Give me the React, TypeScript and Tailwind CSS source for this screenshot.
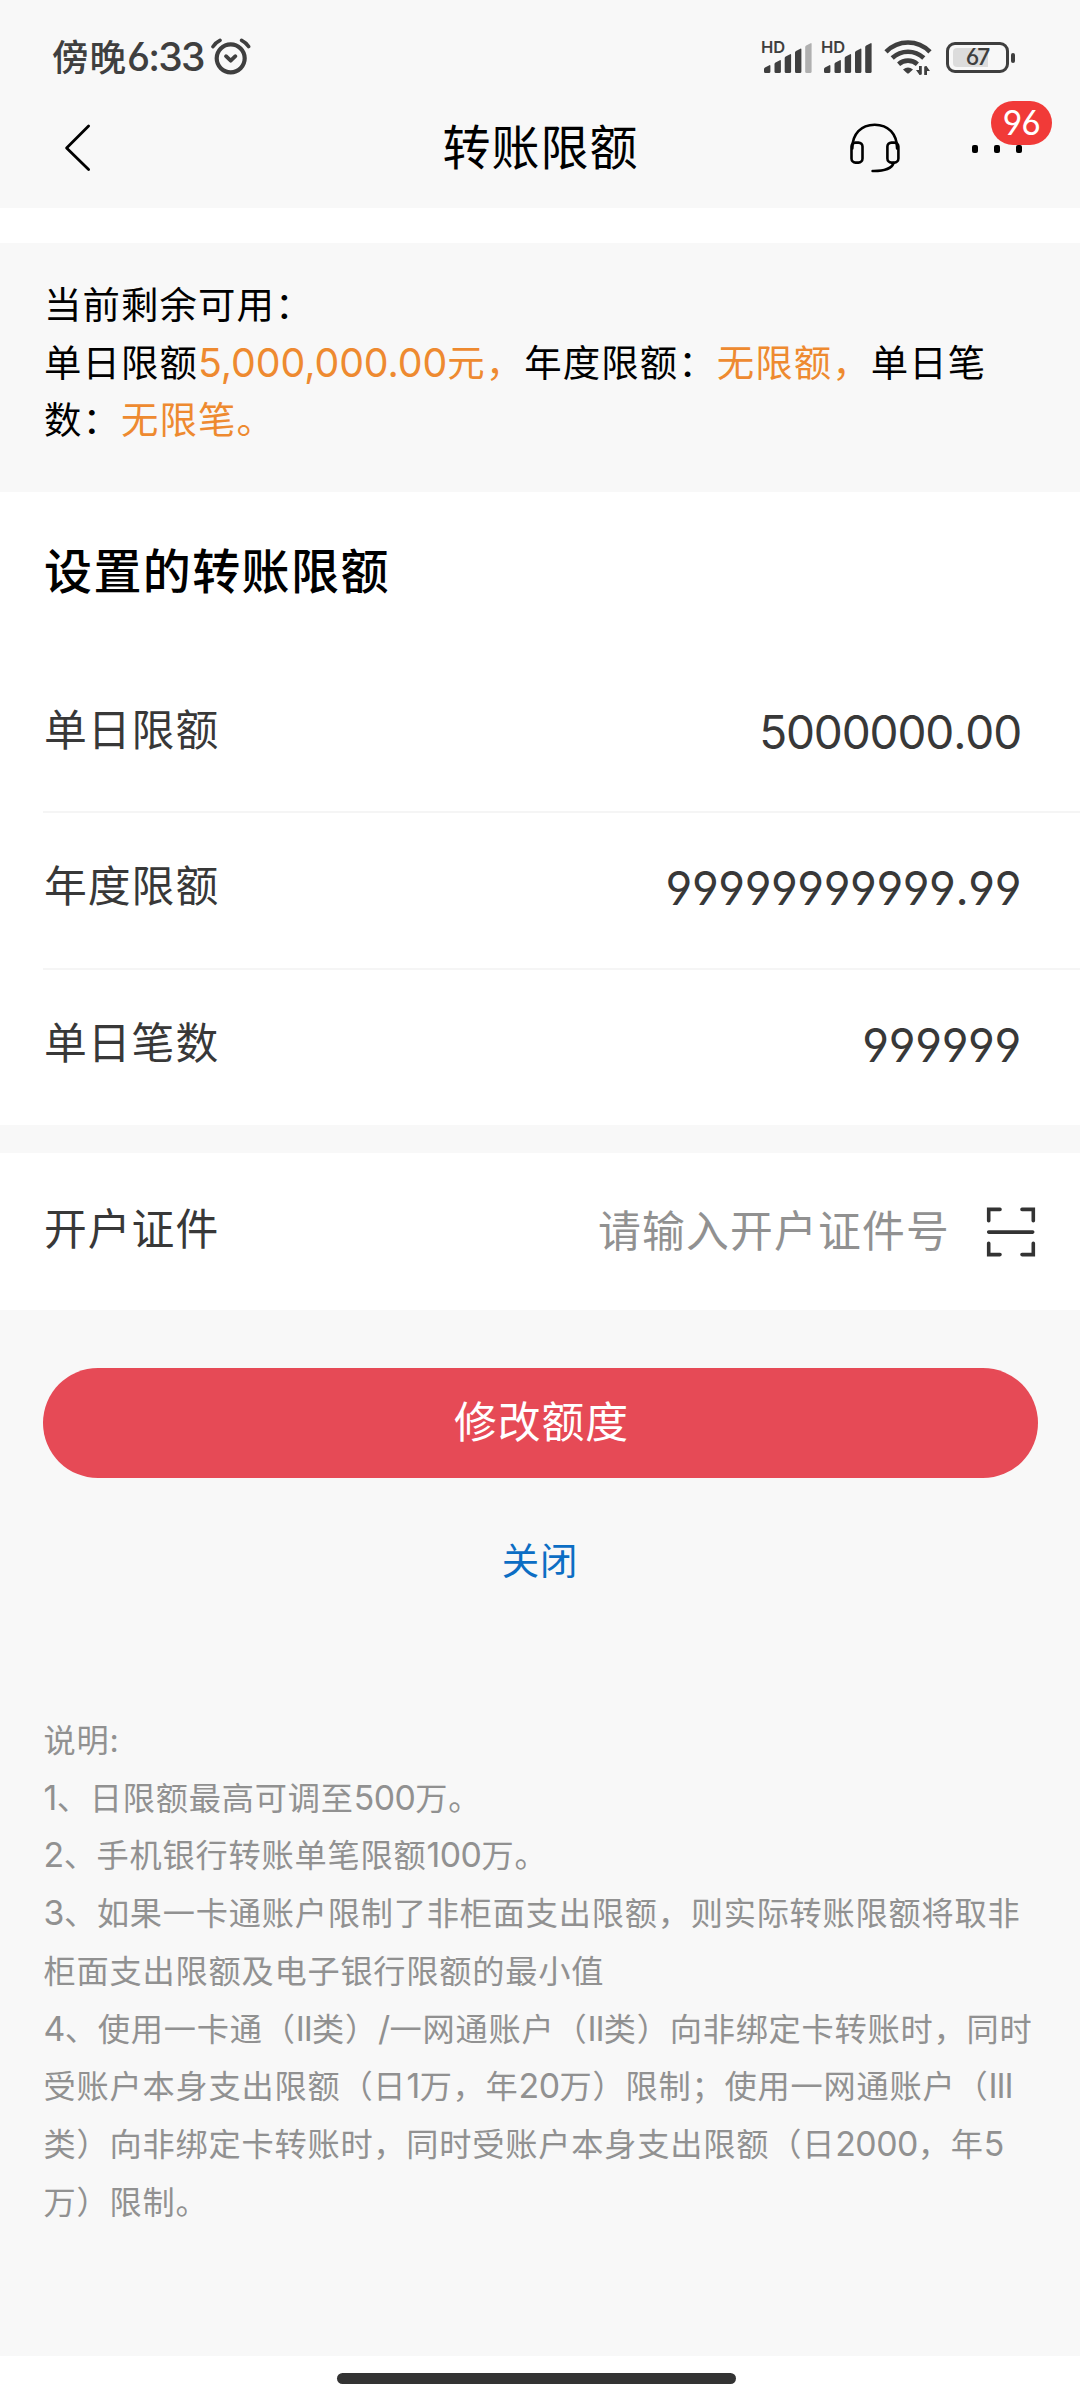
import type { ReactNode } from 'react';

const limits = [
  { label: '单日限额', value: '5000000.00', tracking: 'tracking-[-1.15px]' },
  { label: '年度限额', value: '99999999999.99', tracking: 'tracking-[-0.4px]' },
  { label: '单日笔数', value: '999999', tracking: 'tracking-[-0.3px]' },
];

const bars = [
  { x: 0, h: 8 },
  { x: 10.5, h: 13 },
  { x: 20.7, h: 19 },
  { x: 31, h: 24.5 },
  { x: 41.2, h: 30 },
];

// Latin digits run slightly larger than the Chinese text around them
function N({ children }: { children: ReactNode }) {
  return <span className="text-[1.05em] leading-[0] tracking-[-0.5px]">{children}</span>;
}

// Roman numerals sit tighter than digits
function Roman({ children }: { children: ReactNode }) {
  return <span className="text-[1.05em] leading-[0] tracking-[-1px]">{children}</span>;
}

function AlarmIcon() {
  return (
    <svg width="40" height="37" viewBox="0 0 40 37" fill="none" stroke="#3f3f3f" strokeLinecap="round" strokeLinejoin="round">
      <circle cx="19.7" cy="20.3" r="14" strokeWidth="4.2" />
      <path d="M15 18.2l4.7 4.5 4.7-4.5" strokeWidth="3.8" />
      <path d="M2 8.6Q4.5 4.6 9 2.4M37.6 8.6Q35 4.6 30.6 2.4" strokeWidth="3.6" />
    </svg>
  );
}

function Signal({ weak = false }: { weak?: boolean }) {
  return (
    <div className="relative w-[50px] h-[36px]">
      <span className="absolute -left-px top-px text-[16.5px] leading-[12px] font-semibold">HD</span>
      <svg className="absolute left-[2px] top-[2px]" width="48" height="31" viewBox="0 0 48 31">
        {bars.map((bar, i) => (
          <path
            key={bar.x}
            d={`M${bar.x} ${31 - bar.h + 4}q0-1 1-1.6l4.4-2.2q1-.4 1 .8V29.5q0 1.5-1.4 1.5h-3.6q-1.4 0-1.4-1.5z`}
            fill={weak && i === 4 ? '#b0b0b0' : '#3f3f3f'}
          />
        ))}
      </svg>
    </div>
  );
}

function WifiIcon() {
  return (
    <svg width="48" height="36" viewBox="0 0 48 36" fill="none" stroke="#3f3f3f">
      <path d="M2 11.8C14.5-.6 33.5-.6 46 11.8" strokeWidth="4.6" />
      <path d="M8.2 18C17.2 9.6 30.8 9.6 39.8 18" strokeWidth="4.6" />
      <path d="M14.6 24.2C20 19.4 28 19.4 33.4 24.2" strokeWidth="4.6" />
      <path d="M19 29.4Q24 25.6 29 29.4L25.2 33Q24 34 22.8 33z" fill="#3f3f3f" stroke="none" />
      <path d="M36.4 26v8.6M41.6 35v-8.6" strokeWidth="2.8" />
      <path d="M37 34.8h-1.6L32 30h5zM41 26.2h1.6L46 31h-5z" fill="#3f3f3f" stroke="none" />
    </svg>
  );
}

function Battery() {
  return (
    <div className="flex items-center gap-[2px]">
      <div className="relative w-[63px] h-[31px] rounded-[9px] border-[3px] border-[#3f3f3f] flex items-center justify-center">
        <div className="absolute left-[4px] top-[3px] w-[35px] h-[19px] rounded-l-[4px] bg-[#dcdcdc]" />
        <span className="relative text-[23px] leading-none font-medium tracking-[-1.2px]">67</span>
      </div>
      <div className="w-[4px] h-[10px] rounded-[2px] bg-[#3f3f3f]" />
    </div>
  );
}

function HeadsetIcon() {
  return (
    <svg width="50" height="50" viewBox="0 0 50 50" fill="none" stroke="#000" strokeWidth="2.6" strokeLinecap="round">
      <path d="M2.3 25.5C2.3 11 11 1.8 24.7 1.8S47.1 11 47.1 25.5" />
      <rect x="1.5" y="19.6" width="11" height="20" rx="4" />
      <rect x="37.4" y="19.6" width="11" height="20" rx="4" />
      <path d="M43.6 40C41.6 45.6 36 48.2 22.6 48" />
    </svg>
  );
}

function ScanIcon() {
  return (
    <svg width="50" height="50" viewBox="0 0 50 50" fill="none" stroke="#333" strokeWidth="3.6" strokeLinecap="round">
      <path d="M2.7 13.7V2.4H14M36 2.4h11.3v11.3M47.3 36.3v11.3H36M14 47.6H2.7V36.3M2.7 25.1h44" />
    </svg>
  );
}

function StatusBar() {
  return (
    <div className="h-[96px] pl-[52px] flex text-[#3f3f3f] font-medium">
      <div className="flex pt-[39px]">
        <span className="text-[36.5px] leading-[38px] tracking-[1px] whitespace-nowrap">
          傍晚<span className="text-[39px] leading-[0] tracking-[-1.8px]">6:33</span>
        </span>
      </div>
      <div className="absolute left-[211px] top-[38px]">
        <AlarmIcon />
      </div>
      <div className="absolute left-[762px] top-[40px] flex gap-[10px]">
        <Signal weak />
        <Signal />
        <div className="w-[52px] ml-[2px]">
          <WifiIcon />
        </div>
        <div className="pt-[2px]">
          <Battery />
        </div>
      </div>
    </div>
  );
}

function NavBar() {
  return (
    <div className="h-[112px] flex items-center pb-[9px]">
      <div className="w-[364px] pl-[64px]">
        <svg width="27" height="50" viewBox="0 0 27 50" fill="none" stroke="#000" strokeWidth="2.8" strokeLinecap="round" strokeLinejoin="round">
          <path d="M24.6 3L2.6 25l22 21.6" />
        </svg>
      </div>
      <h1 className="flex-1 pl-px text-center text-[48px] leading-[50px] tracking-[1px] font-normal text-black whitespace-nowrap">转账限额</h1>
      <div className="w-[364px] pr-[28px] flex items-center justify-end">
        <div className="mr-[72px]">
          <HeadsetIcon />
        </div>
        <div className="relative w-[80px] mt-[2px] flex items-center gap-[16.5px]">
          <i className="block w-[5.5px] h-[8px] rounded-[2px] bg-black" />
          <i className="block w-[5.5px] h-[8px] rounded-[2px] bg-black" />
          <i className="block w-[5.5px] h-[8px] rounded-[2px] bg-black" />
          <span className="absolute left-[19px] -top-[44px] w-[61px] h-[44px] rounded-full bg-[#f13a38] text-white text-[34px] leading-[44px] text-center tracking-[-0.6px]">
            96
          </span>
        </div>
      </div>
    </div>
  );
}

export default function App() {
  return (
    <div className="relative w-[1080px] h-[2400px] overflow-hidden bg-white flex flex-col font-['Inter','Noto_Sans_CJK_SC',sans-serif] [font-feature-settings:'cv03','cv04']">
      <header className="h-[208px] bg-[#f8f8f8]">
        <StatusBar />
        <NavBar />
      </header>

      <section className="mt-[35px] h-[249px] bg-[#f8f8f8] pt-[34px] pl-[44px] text-[37.4px] leading-[57.6px] tracking-[1.1px] text-black whitespace-nowrap">
        <p>当前剩余可用：</p>
        <p>
          单日限额
          <span className="text-[#ee8a30]">
            <span className="text-[1.05em] leading-[0] tracking-[-0.05px]">5,000,000.00</span>元，
          </span>
          年度限额：<span className="text-[#ee8a30]">无限额，</span>单日笔
        </p>
        <p>
          数：<span className="text-[#ee8a30]">无限笔。</span>
        </p>
      </section>

      <section className="h-[633px] text-[#383838]">
        <h2 className="h-[162px] pt-[55px] pl-[44px] text-[48px] leading-[50px] tracking-[1.4px] font-medium text-black">
          设置的转账限额
        </h2>
        {limits.map((item, i) => (
          <div
            key={item.label}
            className={`ml-[43px] pl-px h-[157px] pr-[59px] flex items-center justify-between ${i > 0 ? 'border-t-2 border-[#f5f5f5] pb-[4px]' : ''}`}
          >
            <span className="text-[42.8px] leading-[50px] tracking-[1px] mb-[4px]">{item.label}</span>
            <span className={`text-[46px] leading-[50px] mb-[2px] [font-kerning:none] ${item.tracking}`}>{item.value}</span>
          </div>
        ))}
      </section>

      <section className="mt-[28px] bg-white relative h-[157px] pl-[44px] pr-[44px] flex items-center before:absolute before:inset-x-0 before:-top-[28px] before:h-[28px] before:bg-[#f8f8f8]">
        <span className="text-[42.8px] leading-[50px] tracking-[1px] text-[#383838] mb-[3px]">开户证件</span>
        <span className="ml-auto mr-[36px] text-[42.8px] leading-[50px] tracking-[1.2px] text-[#919191]">请输入开户证件号</span>
        <ScanIcon />
      </section>

      <main className="h-[1046px] bg-[#f8f8f8] px-[43px] pt-[58px]">
        <button className="block w-[995px] h-[110px] pl-[2px] rounded-full bg-[#e64a56] text-white text-[42.8px] leading-[50px] tracking-[1px]">
          修改额度
        </button>
        <div className="mt-[59px] text-center text-[37.4px] leading-[50px] tracking-[0.8px] text-[#0c6ec4]">关闭</div>
        <div className="mt-[125px] ml-[0.5px] text-[32.2px] leading-[57.7px] tracking-[0.8px] text-[#919191] whitespace-nowrap">
          <p>说明:</p>
          <p><N>1</N>、日限额最高可调至<N>500</N>万。</p>
          <p><N>2</N>、手机银行转账单笔限额<N>100</N>万。</p>
          <p><N>3</N>、如果一卡通账户限制了非柜面支出限额，则实际转账限额将取非</p>
          <p>柜面支出限额及电子银行限额的最小值</p>
          <p><N>4</N>、使用一卡通（<Roman>II</Roman>类）<N>/</N>一网通账户（<Roman>II</Roman>类）向非绑定卡转账时，同时</p>
          <p>受账户本身支出限额（日<N>1</N>万，年<N>20</N>万）限制；使用一网通账户（<Roman>III</Roman></p>
          <p>类）向非绑定卡转账时，同时受账户本身支出限额（日<N>2000</N>，年<N>5</N></p>
          <p>万）限制。</p>
        </div>
      </main>

      <footer className="flex-1 flex justify-center pt-[17px] pr-[7px]">
        <div className="w-[399px] h-[10.5px] rounded-full bg-[#333]" />
      </footer>
    </div>
  );
}
